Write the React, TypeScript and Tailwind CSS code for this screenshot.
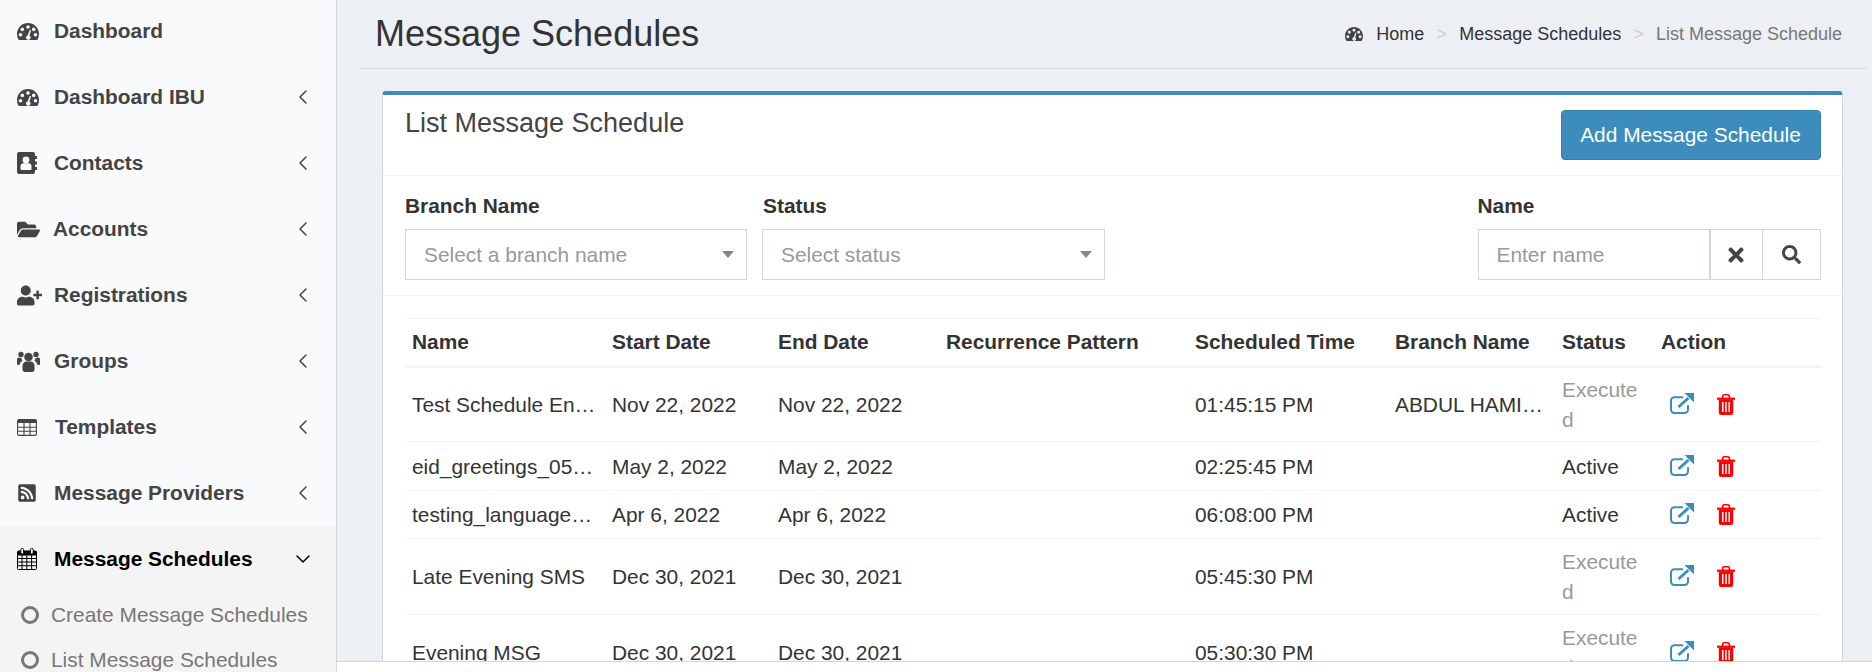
import { FaFolderOpen, FaUserPlus, FaRssSquare, FaTimes, FaSearch } from "react-icons/fa";
import { ChevronLeft, ChevronDown } from "lucide-react";
import type { ReactNode } from "react";

const font = "font-['Liberation_Sans',Arial,sans-serif]";

function GaugeIcon({ w = 22, h = 17, color = "#444" }: { w?: number; h?: number; color?: string }) {
  return (
    <svg width={w} height={h} viewBox="0 0 22 17" fill={color}>
      <path
        fillRule="evenodd"
        d="M11 0C4.9 0 0 4.9 0 11c0 2.2.6 4.2 1.7 5.9.2.1.4.1.6.1h17.4c.2 0 .4 0 .6-.1C21.4 15.2 22 13.200 22 11 22 4.900 17.100 0 11 0zM11 2.200a1.800 1.800 0 1 1 0 3.600 1.800 1.800 0 0 1 0-3.600zM5.300 4.600a1.800 1.800 0 1 1 0 3.600 1.800 1.800 0 0 1 0-3.600zM16.700 4.600a1.800 1.800 0 1 1 0 3.600 1.800 1.800 0 0 1 0-3.600zM3.500 10a1.800 1.800 0 1 1 0 3.600 1.800 1.800 0 0 1 0-3.600zM18.500 10a1.800 1.800 0 1 1 0 3.600 1.800 1.800 0 0 1 0-3.600zM12.800 6.800l1.200.4-1.500 5.500a2.200 2.200 0 1 1-1.900-.3z"
      />
    </svg>
  );
}

function ContactIcon() {
  return (
    <svg width="20" height="22" viewBox="0 0 20 22">
      <rect x="0" y="0" width="18" height="22" rx="2" fill="#444" />
      <path d="M18 4h2v3h-2zM18 9.500h2v3h-2zM18 15h2v3h-2z" fill="#444" />
      <circle cx="9" cy="8" r="3.400" fill="#fff" />
      <path d="M3.500 17v-2.500c0-2 1.500-3.200 3-3.200h5c1.500 0 3 1.200 3 3.200V17c0 .5-.4 1-1 1h-9c-.6 0-1-.5-1-1z" fill="#fff" />
    </svg>
  );
}

function UsersIcon() {
  return (
    <svg width="23" height="21" viewBox="0 0 23 21" fill="#444">
      <circle cx="11.500" cy="6" r="4.300" />
      <circle cx="4" cy="3.500" r="2.700" />
      <circle cx="19" cy="3.500" r="2.700" />
      <path d="M5.500 15c0-3 2-4.500 3.500-4.500h5c1.500 0 3.500 1.500 3.500 4.500v3.500c0 1.500-1 2.500-2.500 2.500H8c-1.500 0-2.500-1-2.500-2.500z" />
      <path d="M0 8.500C0 7 1 6.500 2.500 6.500c.6.500 1.400.8 2.100.8-.1.700.4 1.800 1 2.500-1.600.9-2.900 2.400-3.100 4.200H1.500C.5 14 0 13.500 0 12.500z" />
      <path d="M23 8.500C23 7 22 6.500 20.500 6.500c-.6.500-1.400.8-2.100.8.1.700-.4 1.800-1 2.500 1.600.9 2.900 2.400 3.100 4.200h1c1 0 1.500-.5 1.500-1.500z" />
    </svg>
  );
}

function TableIcon() {
  return (
    <svg width="20" height="17" viewBox="0 0 20 17" fill="none" stroke="#444" strokeWidth="1.100">
      <rect x="0.600" y="0.600" width="18.800" height="15.800" rx="1.400" />
      <path d="M1 8.200h18M1 12.300h18M7 4v12.500M13 4v12.500" />
      <path d="M1 0.600h18V4H1z" fill="#444" stroke="none" />
    </svg>
  );
}

function CalendarIcon() {
  return (
    <svg width="20" height="22" viewBox="0 0 20 22" fill="none" stroke="#000" strokeWidth="1">
      <rect x="0.500" y="3" width="19" height="18.500" rx="1" />
      <path d="M1 10.500h18M1 14h18M1 17.700h18M5 7v14M9.800 7v14M14.600 7v14" />
      <path d="M1 3h18v4.500H1z" fill="#000" stroke="none" />
      <rect x="3.800" y="0.500" width="2.800" height="5.500" rx="1.200" fill="#fff" />
      <rect x="13.400" y="0.500" width="2.800" height="5.500" rx="1.200" fill="#fff" />
    </svg>
  );
}

function LinkIcon() {
  return (
    <svg width="24" height="21" viewBox="0 0 24 21" fill="none" className="-mt-[3px]">
      <path d="M13 4.200H4.500A3.500 3.500 0 0 0 1 7.700v8.800A3.500 3.500 0 0 0 4.500 20h10a3.500 3.500 0 0 0 3.500-3.500v-4.200" stroke="#3c8dbc" strokeWidth="2" />
      <path d="M8.500 14l10-9" stroke="#3c8dbc" strokeWidth="3" />
      <path d="M14.500 0H24v9.500z" fill="#3c8dbc" />
    </svg>
  );
}

function TrashIcon() {
  return (
    <svg width="18" height="21" viewBox="0 0 18 21" fill="#f00">
      <path d="M0 3.600h18v2.200H0z" />
      <path d="M4.800 4V2.600C4.800 1.200 5.800 0 7 0h4c1.200 0 2.200 1.200 2.200 2.600V4h-1.700V2c0-.2-.2-.4-.5-.4H7c-.3 0-.5.200-.5.400v2z" />
      <path fillRule="evenodd" d="M1.800 5.500h14.400v13A2.500 2.500 0 0 1 13.700 21H4.300a2.500 2.500 0 0 1-2.500-2.500zM5 8v10h1.500V8zM8.250 8v10h1.500V8zM11.500 8v10H13V8z" />
    </svg>
  );
}

type Item = { label: string; icon: ReactNode; gap: string; chevron?: boolean };

const menu: Item[] = [
  { label: "Dashboard", icon: <GaugeIcon />, gap: "w-[33px]" },
  { label: "Dashboard IBU", icon: <GaugeIcon />, gap: "w-[33px]", chevron: true },
  { label: "Contacts", icon: <ContactIcon />, gap: "w-[33px]", chevron: true },
  { label: "Accounts", icon: <FaFolderOpen size={23} />, gap: "w-[32px]", chevron: true },
  { label: "Registrations", icon: <FaUserPlus size={25} />, gap: "w-[33px]", chevron: true },
  { label: "Groups", icon: <UsersIcon />, gap: "w-[33px]", chevron: true },
  { label: "Templates", icon: <TableIcon />, gap: "w-[34px]", chevron: true },
  { label: "Message Providers", icon: <FaRssSquare size={20} />, gap: "w-[33px]", chevron: true },
];

const rows = [
  { name: "Test Schedule English Today", start: "Nov 22, 2022", end: "Nov 22, 2022", time: "01:45:15 PM", branch: "ABDUL HAMID BRANCH", status: "Executed", h: "h-[75px]" },
  { name: "eid_greetings_05_2022_schedule", start: "May 2, 2022", end: "May 2, 2022", time: "02:25:45 PM", branch: "", status: "Active", h: "h-[49px] [&>td]:pt-[1px]" },
  { name: "testing_language_schedule", start: "Apr 6, 2022", end: "Apr 6, 2022", time: "06:08:00 PM", branch: "", status: "Active", h: "h-[48px]" },
  { name: "Late Evening SMS", start: "Dec 30, 2021", end: "Dec 30, 2021", time: "05:45:30 PM", branch: "", status: "Executed", h: "h-[76px]" },
  { name: "Evening MSG", start: "Dec 30, 2021", end: "Dec 30, 2021", time: "05:30:30 PM", branch: "", status: "Executed", h: "h-[76px]" },
];

const headers = ["Name", "Start Date", "End Date", "Recurrence Pattern", "Scheduled Time", "Branch Name", "Status", "Action"];

function Sidebar() {
  return (
    <aside className="w-[337px] shrink-0 h-full bg-[#f9fafc] border-r border-[#d2d6de] overflow-hidden">
      <div className="-mt-[2px]">
        {menu.map((m) => (
          <div key={m.label} className="h-[66px] flex items-center pl-[17px] pr-[21px] text-[#444] font-bold">
            <span className={`${m.gap} shrink-0 flex items-center h-[24px]`}>
              <span className="shrink-0">{m.icon}</span>
            </span>
            <span className="ml-[4px] flex-1 leading-[30px]">{m.label}</span>
            {m.chevron && <ChevronLeft size={24} strokeWidth={1.5} className="text-[#444]" />}
          </div>
        ))}
        <div className="bg-[#f4f4f5] h-[150px]">
          <div className="h-[66px] flex items-center pl-[17px] pr-[21px] text-black font-bold">
            <span className="w-[33px] shrink-0 flex items-center"><CalendarIcon /></span>
            <span className="ml-[4px] flex-1 leading-[30px]">Message Schedules</span>
            <ChevronDown size={24} strokeWidth={1.5} />
          </div>
          {["Create Message Schedules", "List Message Schedules"].map((s) => (
            <div key={s} className="h-[45px] flex items-center pl-[21px] text-[#777] first:mt-[1px]">
              <span className="w-[18px] h-[18px] rounded-full border-[3px] border-[#777] mr-[12px] shrink-0" />
              {s}
            </div>
          ))}
        </div>
      </div>
    </aside>
  );
}

function Select({ label, text, w, labelPad }: { label: string; text: string; w: string; labelPad?: string }) {
  return (
    <div className={w}>
      <div className={`font-bold text-[#333] leading-[30px] h-[30px] mt-[15px] mb-[8px] ${labelPad ?? ""}`}>{label}</div>
      <div className="h-[51px] border-[1.5px] border-[#d2d6de] flex items-center pl-[18px] pr-[12px] text-[#999]">
        <span className="flex-1">{text}</span>
        <span className="w-0 h-0 border-x-[6px] border-x-transparent border-t-[7px] border-t-[#888]" />
      </div>
    </div>
  );
}

export default function App() {
  return (
    <div className={`${font} h-[672px] w-[1872px] flex overflow-hidden text-[20.9px] leading-[30px] text-[#333]`}>
      <Sidebar />
      <div className="flex-1 min-w-0 flex flex-col bg-white">
        <main className="h-[661px] shrink-0 bg-[#ecf0f5] overflow-hidden pl-[23px] pr-[6px]">
          <header className="h-[69px] border-b border-[#d2d6de] flex items-center justify-between pl-[15px] pr-[24px] pb-[1px]">
            <h1 className="text-[36px] leading-[40px] text-[#333]">Message Schedules</h1>
            <nav className="flex items-center text-[18px] leading-[24px] text-[#333]">
              <GaugeIcon w={18} h={14} />
              <span className="ml-[13px]">Home</span>
              <span className="text-[#ccc] mx-[12.3px]">&gt;</span>
              <span>Message Schedules</span>
              <span className="text-[#ccc] mx-[12px]">&gt;</span>
              <span className="text-[#777]">List Message Schedule</span>
            </nav>
          </header>
          <section className="mt-[22px] ml-[21.5px] w-[1461.5px] bg-white border-t-[4px] border-t-[#3c8dbc] border-x-[1.5px] border-x-[#d2d6de] rounded-t-[4px] h-[600px]">
            <div className="h-[81px] border-b border-[#f4f4f4] flex justify-between pl-[22.5px] pr-[21.5px]">
              <h2 className="text-[27px] leading-[30px] mt-[13px] text-[#444]">List Message Schedule</h2>
              <button className="mt-[15px] h-[50px] w-[260px] rounded-[4px] bg-[#3c8dbc] border border-[#367fa9] text-white">Add Message Schedule</button>
            </div>
            <div className="h-[120px] border-b border-[#f4f4f4] flex pl-[22.5px] pr-[21.5px]">
              <Select label="Branch Name" text="Select a branch name" w="w-[342px]" />
              <div className="ml-[15px]"><Select label="Status" text="Select status" w="w-[343px]" labelPad="pl-[1px]" /></div>
              <div className="ml-auto w-[343px]">
                <div className="font-bold text-[#333] leading-[30px] h-[30px] mt-[15px] mb-[8px]">Name</div>
                <div className="h-[51px] flex border-[1.5px] border-[#d2d6de]">
                  <div className="w-[232px] flex items-center pl-[18px] text-[#999] border-r-[2px] border-[#d2d6de]">Enter name</div>
                  <div className="w-[52px] flex items-center justify-center border-r border-[#d2d6de] text-[#444]"><FaTimes size={22} /></div>
                  <div className="flex-1 flex items-center justify-center text-[#444]"><FaSearch size={19} /></div>
                </div>
              </div>
            </div>
            <div className="pt-[22px] pl-[22.5px]">
              <table className="w-[1416px] table-fixed border-collapse">
                <colgroup>
                  <col className="w-[200px]" />
                  <col className="w-[166px]" />
                  <col className="w-[168px]" />
                  <col className="w-[249px]" />
                  <col className="w-[200px]" />
                  <col className="w-[167px]" />
                  <col className="w-[99px]" />
                  <col />
                </colgroup>
                <thead>
                  <tr className="border-t border-[#f4f4f4] border-b-[3px] border-b-[#f4f4f4] h-[48px]">
                    {headers.map((h) => (
                      <th key={h} className="text-left font-bold pl-[7px] pr-[8px] whitespace-nowrap text-[#333]">{h}</th>
                    ))}
                  </tr>
                </thead>
                <tbody>
                  {rows.map((r) => (
                    <tr key={r.name} className={`${r.h} border-b border-[#f4f4f4]`}>
                      <td className="pl-[7px] pr-[8px] truncate">{r.name}</td>
                      <td className="pl-[7px] pr-[8px] whitespace-nowrap">{r.start}</td>
                      <td className="pl-[7px] pr-[8px] whitespace-nowrap">{r.end}</td>
                      <td className="pl-[7px] pr-[8px]"></td>
                      <td className="pl-[7px] pr-[8px] whitespace-nowrap">{r.time}</td>
                      <td className="pl-[7px] pr-[8px] truncate">{r.branch}</td>
                      <td className={`pl-[7px] pr-[8px] break-all ${r.status === "Active" ? "text-[#333]" : "text-[#999]"}`}>{r.status}</td>
                      <td className="pl-[7px] pr-[8px]">
                        <div className="flex items-center pl-[9px] gap-[23px]">
                          <LinkIcon />
                          <TrashIcon />
                        </div>
                      </td>
                    </tr>
                  ))}
                </tbody>
              </table>
            </div>
          </section>
        </main>
        <footer className="flex-1 border-t border-[#d2d6de] bg-white" />
      </div>
    </div>
  );
}
